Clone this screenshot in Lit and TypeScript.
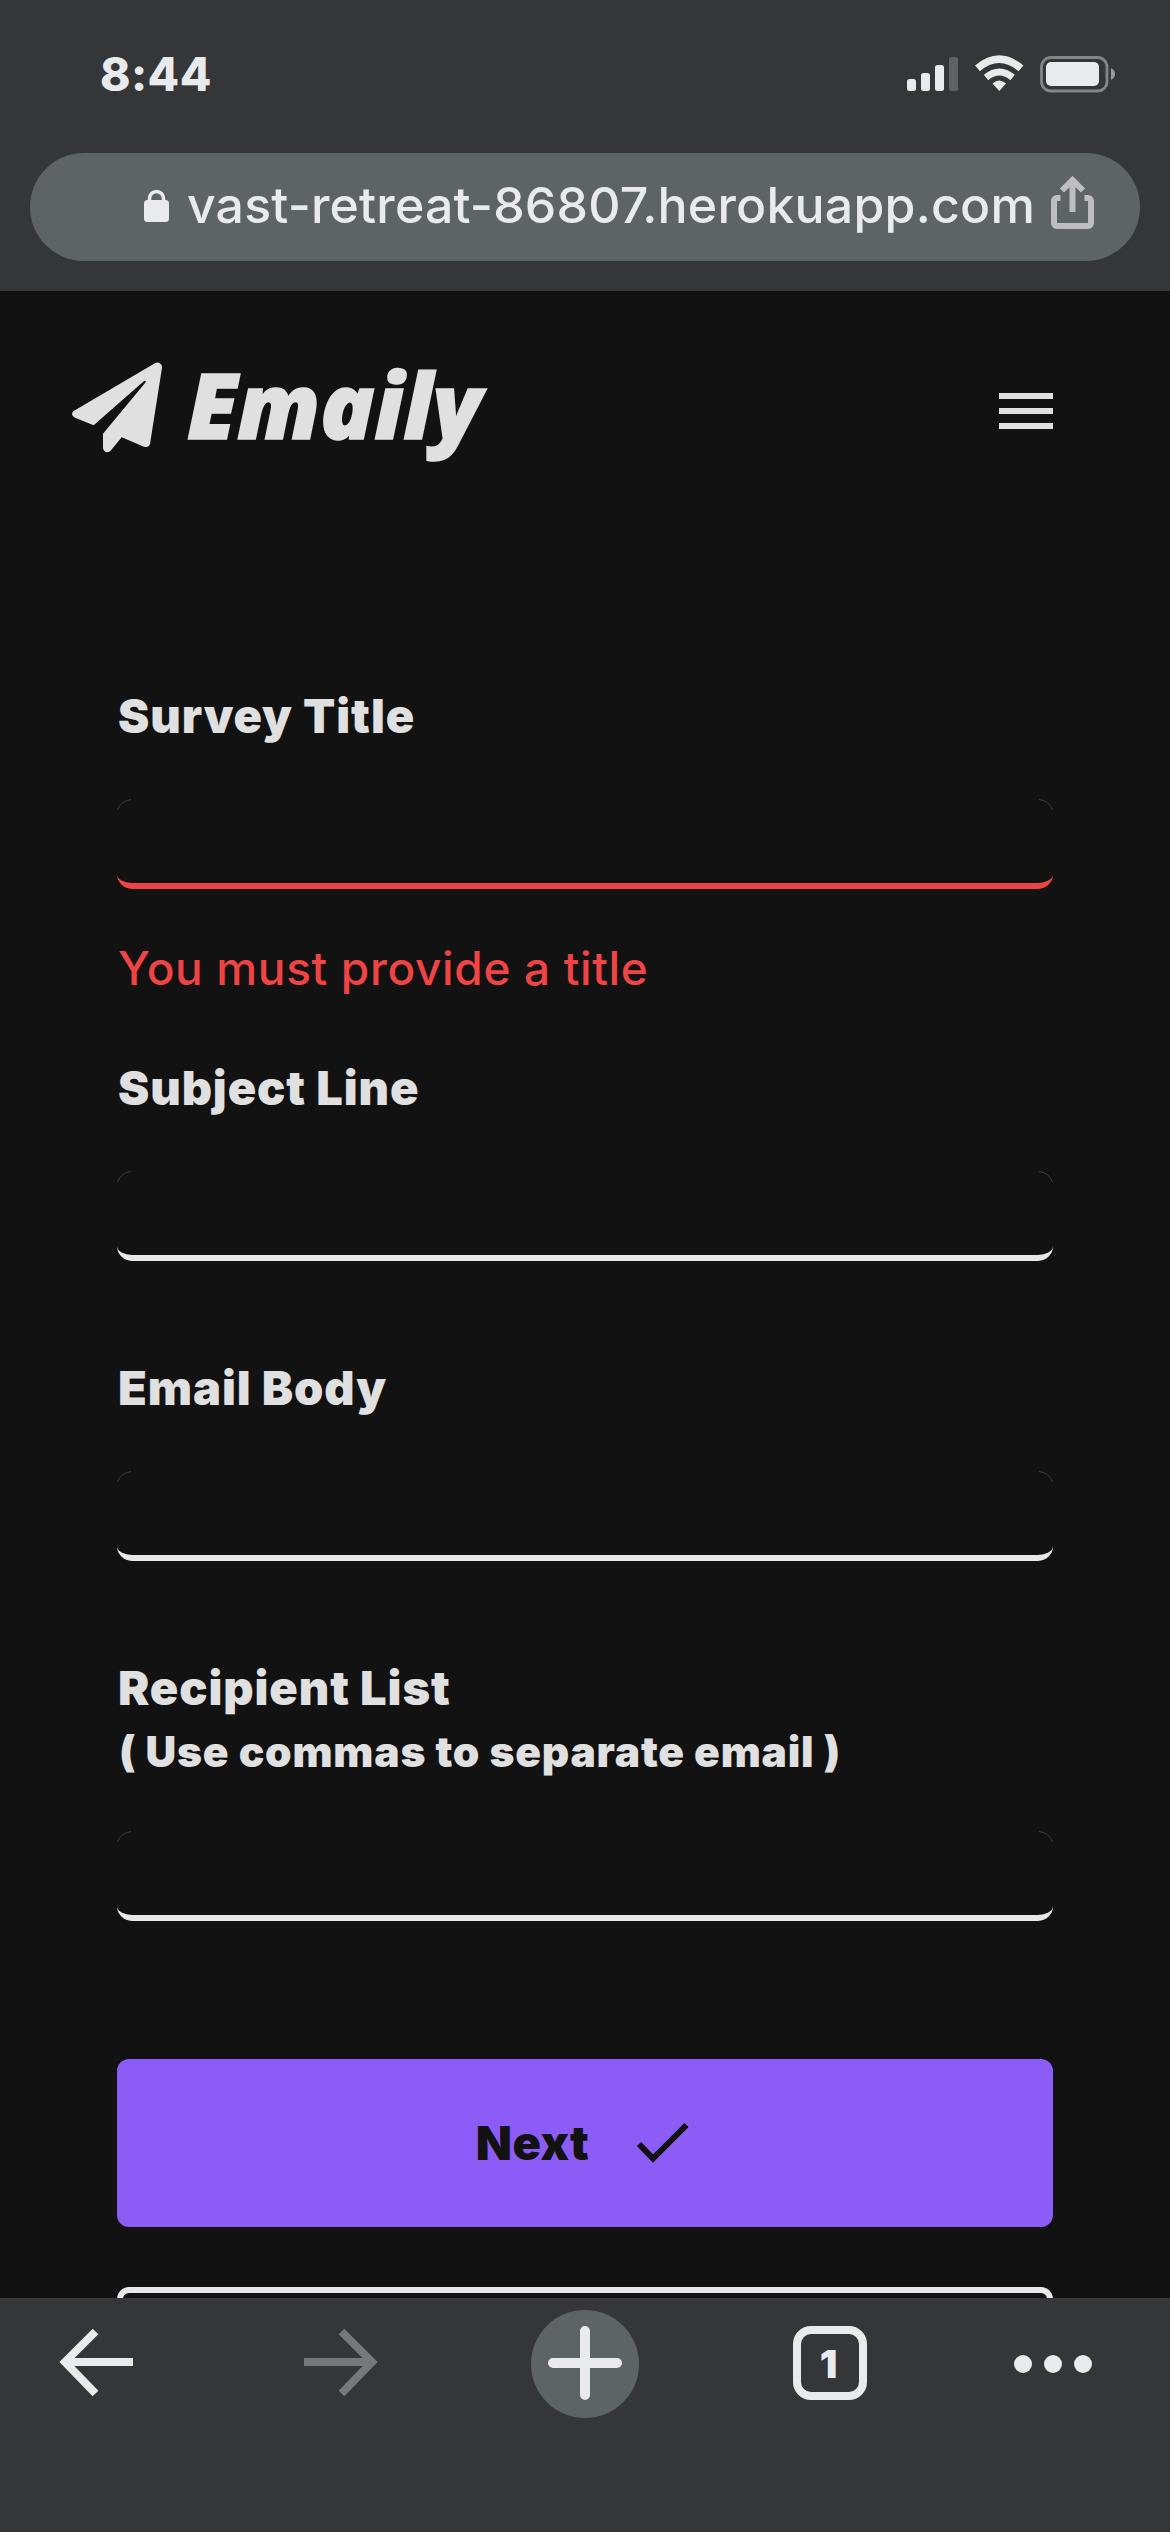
import { LitElement, html, css, svg, nothing } from "lit";
import { customElement, property } from "lit/decorators.js";

interface Field {
  label: string;
  hint?: string;
  error?: string;
}

const FIELDS: Field[] = [
  { label: "Survey Title", error: "You must provide a title" },
  { label: "Subject Line" },
  { label: "Email Body" },
  { label: "Recipient List", hint: "( Use commas to separate email )" },
];

@customElement("survey-field")
class SurveyField extends LitElement {
  @property({ attribute: false }) field!: Field;

  static styles = css`
    :host { display: block; }
    .label {
      display: block; height: 60px; line-height: 59px; margin-left: 1px;
      font-size: 47px; font-weight: 900; letter-spacing: 0.9px; color: #e0e0e0; white-space: nowrap;
    }
    .hint { height: 60px; line-height: 68px; font-size: 42.5px; letter-spacing: 0.8px; margin-left: 2px; }
    .input {
      display: block; box-sizing: border-box; width: 100%; height: 90px;
      margin: 53px 0 0; padding: 0 24px; outline: none;
      background: #121212; border: 0 solid #e8e8ea; border-bottom-width: 6px;
      border-radius: 15px; color: #e0e0e0; font: inherit;
    }
    .invalid { border-color: #ef4444; }
    .error {
      height: 60px; line-height: 60px; margin: 49px 0 0 1px;
      font-size: 46px; font-weight: 500; letter-spacing: 0.65px; color: #ef4444; white-space: nowrap;
    }
    .shell { position: relative; }
    .corners { position: absolute; left: 0; top: 0; pointer-events: none; }
  `;

  render() {
    const { label, hint, error } = this.field;
    return html`
      <span class="label">${label}</span>
      ${hint ? html`<span class="label hint">${hint}</span>` : nothing}
      <div class="shell">
        <input class="input ${error ? "invalid" : ""}" />
        <svg class="corners" width="936" height="20" fill="none" stroke="#4a4a4a" stroke-width="0.8">
          <path d="M.5 11Q4 1.5 14 .5M922 .5Q932 1.5 935.500 11" />
        </svg>
      </div>
      ${error ? html`<div class="error">${error}</div>` : nothing}
    `;
  }
}

@customElement("app-root")
class AppRoot extends LitElement {
  static styles = css`
    :host {
      display: flex; flex-direction: column; box-sizing: border-box;
      width: 1170px; height: 2532px; overflow: hidden;
      background: #121212; color: #e8eaed;
      font-family: Inter, "Liberation Sans", sans-serif;
    }
    svg { display: block; flex: none; }
    .chrome { flex: none; height: 291px; background: #353638; }
    .status {
      display: flex; align-items: flex-start; justify-content: space-between;
      box-sizing: border-box; height: 153px; padding: 44px 54px 0 100px;
    }
    .time { font-size: 46px; line-height: 60px; font-weight: 800; letter-spacing: 0.4px; }
    .indicators { margin-top: 6px; }
    .omnibox {
      display: flex; align-items: center; box-sizing: border-box;
      width: 1110px; height: 108px; margin: 0 30px; padding-left: 114px;
      background: #5e6366; border-radius: 54px;
    }
    .lock { margin-bottom: 3px; }
    .url {
      flex: none; width: 864px; margin: 0 0 4px 17px; font-size: 50px;
      line-height: 64px; font-weight: 500; letter-spacing: 0.2px; white-space: nowrap;
    }
    .page { flex: none; height: 2007px; overflow: hidden; }
    .nav {
      display: flex; align-items: center; box-sizing: border-box;
      height: 240px; padding: 0 117px 0 72px;
    }
    .brand { display: flex; align-items: center; flex: 1; color: #e0e0e0; }
    .plane { margin-bottom: 7px; }
    .word {
      margin: 0 0 15px 23px; font-family: "Open Sans", sans-serif; font-size: 89.5px;
      line-height: 120px; font-weight: 800; font-style: italic;
      -webkit-text-stroke: 1.5px #e0e0e0;
    }
    .form { display: flex; flex-direction: column; gap: 97px; padding: 155px 117px 0; }
    .with-error { margin-bottom: -37px; }
    .actions { display: flex; flex-direction: column; gap: 60px; padding: 138px 117px 0; }
    .btn {
      display: flex; flex: none; align-items: center; justify-content: center;
      box-sizing: border-box; width: 936px; height: 168px; margin: 0; padding: 0 4px 0 0;
      border: 0; border-radius: 12px; background: #8b5cf6; color: #121212;
      font: 900 47px/60px Inter, sans-serif; letter-spacing: 0.4px; gap: 47px;
    }
    .outline { background: transparent; border: 6px solid #e8e8ea; color: #e8e8ea; }
    .toolbar { flex: none; height: 234px; background: #353638; }
    .count { font: 900 39px Inter, sans-serif; }
  `;

  private indicators() {
    return svg`
      <svg class="indicators" width="210" height="44" viewBox="906 50 210 44">
        <g fill="#e8eaed">
          <rect x="907" y="79" width="9" height="12" rx="2.500" />
          <rect x="921" y="73" width="9" height="18" rx="2.500" />
          <rect x="935" y="65" width="9" height="26" rx="2.500" />
          <rect x="949" y="57" width="9" height="34" rx="2.500" fill="#5f6368" />
          <path d="M992.500 83.500Q999.300 77.500 1006 83.500L999.300 91Z" />
        </g>
        <g fill="none" stroke="#e8eaed">
          <path stroke-width="7.500" d="M977.500 68.300Q999.300 50 1021 68.300" />
          <path stroke-width="7" d="M986 77.500Q999.300 66.500 1012.600 77.500" />
        </g>
        <rect x="1041.500" y="57.500" width="65.500" height="33.500" rx="9.500" fill="none" stroke="#848587" stroke-width="2.800" />
        <rect x="1046" y="62" width="53" height="24" rx="5" fill="#e8eaed" />
        <path d="M1111 68Q1115 70.500 1115 74T1111 80Z" fill="#9b9c9e" />
      </svg>`;
  }

  render() {
    return html`
      <header class="chrome">
        <div class="status">
          <span class="time">8:44</span>
          ${this.indicators()}
        </div>
        <div class="omnibox">
          <svg class="lock" width="26" height="34" viewBox="0 0 26 34">
            <rect x="0" y="11" width="25" height="22" rx="3.500" fill="#e8eaed" />
            <path d="M5.500 12V9.500a7 7 0 0 1 14 0V12" fill="none" stroke="#e8eaed" stroke-width="3.500" />
          </svg>
          <span class="url">vast-retreat-86807.herokuapp.com</span>
          <svg width="44" height="62" viewBox="1050 176 44 62" fill="none" stroke="#bdbec0" stroke-width="6">
            <path d="M1059.500 198H1056a3 3 0 0 0-3 3v22a3 3 0 0 0 3 3h31a3 3 0 0 0 3-3v-22a3 3 0 0 0-3-3h-3.500" />
            <path d="M1071.500 212V181M1061 190.500l10.500-10.500 10.500 10.500" />
          </svg>
        </div>
      </header>

      <main class="page">
        <nav class="nav">
          <div class="brand">
            <svg class="plane" width="92" height="92" viewBox="66 65 276 276" fill="#e0e0e0">
              <path d="M71 212L316 68Q323 64 330 69Q337 74 336 82L300 311Q298 318 291 320Q286 321 282 319L215 291L183 330Q176 338 167 335Q159 331 159 323V280L287 126Q289 121 283 121L131 255L75 232Q66 228 66 221Q66 215 71 212Z" />
            </svg>
            <span class="word">Emaily</span>
          </div>
          <svg width="54" height="36" fill="#e0e0e0">
            <rect width="54" height="6" /><rect y="15" width="54" height="6" /><rect y="30" width="54" height="6" />
          </svg>
        </nav>
        <form class="form">
          ${FIELDS.map((f) => html`<survey-field class=${f.error ? "with-error" : ""} .field=${f}></survey-field>`)}
        </form>
        <div class="actions">
          <button class="btn">
            <span>Next</span>
            <svg width="54" height="42" viewBox="0 0 54 42" fill="none" stroke="#121212" stroke-width="6">
              <path d="M3 22L17 36.500L50.500 3" />
            </svg>
          </button>
          <button class="btn outline"></button>
        </div>
      </main>

      <footer class="toolbar">
        <svg width="1170" height="234" viewBox="0 2298 1170 234" fill="none">
          <path d="M133 2362H66M95.500 2331.500L65 2362L95.500 2393.500" stroke="#e8eaed" stroke-width="8" />
          <path d="M304 2362H371M341.500 2331.500L372 2362L341.500 2393.500" stroke="#75797c" stroke-width="8" />
          <circle cx="585" cy="2364" r="54" fill="#5e6366" />
          <path d="M553 2363H617M585 2331V2395" stroke="#e8eaed" stroke-width="10" stroke-linecap="round" />
          <rect x="797" y="2330" width="66" height="66" rx="14" stroke="#e8eaed" stroke-width="8" />
          <text class="count" x="828.500" y="2378" text-anchor="middle" fill="#e8eaed">1</text>
          <g fill="#e8eaed">
            <circle cx="1023" cy="2364" r="9" /><circle cx="1053" cy="2364" r="9" /><circle cx="1083" cy="2364" r="9" />
          </g>
        </svg>
      </footer>
    `;
  }
}
